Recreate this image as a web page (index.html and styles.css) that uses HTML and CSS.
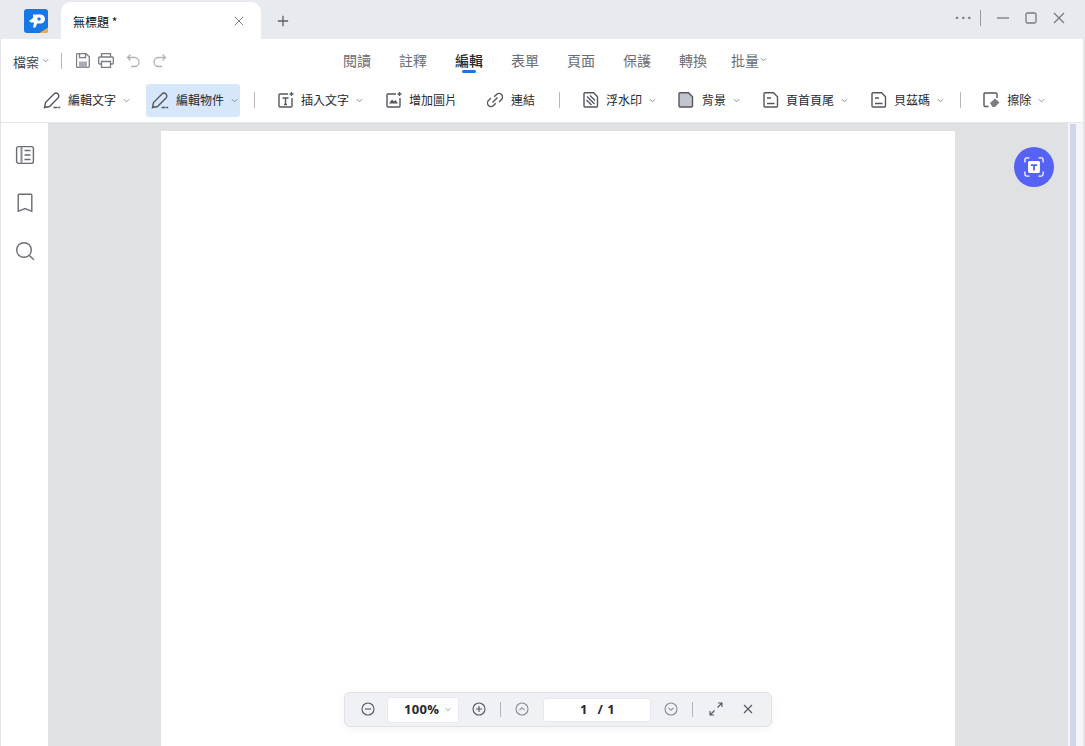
FILE: index.html
```html
<!DOCTYPE html>
<html lang="zh-Hant">
<head>
<meta charset="utf-8">
<title>無標題</title>
<link rel="stylesheet" href="styles.css">
</head>
<body>
<div class="window">
  <header class="titlebar">
    <svg class="logo" viewBox="0 0 24 24"><rect width="24" height="24" rx="3" fill="#1678e6"/><path d="M24 18.500V21a3 3 0 0 1-3 3h-5.500z" fill="#f5a742"/><path d="M5 12 9 9V5.500h7.500a4.500 4.500 0 0 1 0 9H13l-1.500 4H9l1-5H7z" fill="#fff"/><circle cx="15" cy="10" r="1.700" fill="#1678e6"/></svg>
    <div class="tab"><span class="tab-title">無標題 *</span>
      <svg class="tab-close" viewBox="0 0 12 12"><path d="M1 1l10 10M11 1 1 11"/></svg></div>
    <svg class="tab-add" viewBox="0 0 14 14"><path d="M7 1v12M1 7h12"/></svg>
    <div class="winctl">
      <span class="dots">···</span><i class="wsep"></i>
      <svg viewBox="0 0 12 12" class="wbtn"><path d="M0 6h12"/></svg>
      <svg viewBox="0 0 12 12" class="wbtn"><rect x="1" y="1" width="10" height="10" rx="1.500"/></svg>
      <svg viewBox="0 0 12 12" class="wbtn"><path d="M1 1l10 10M11 1 1 11"/></svg>
    </div>
  </header>

  <div class="menubar">
    <div class="filemenu">
      <span class="file">檔案</span><svg class="chev" viewBox="0 0 8 5"><path d="M1 1l3 3 3-3"/></svg>
      <i class="vsep short"></i>
      <svg class="qi save" viewBox="0 0 14 15"><path d="M1.500.7h8.500l3.300 3v9.600a1 1 0 0 1-1 1H1.500a1 1 0 0 1-1-1V1.700a1 1 0 0 1 1-1z"/><path d="M3.500.7v4h6v-4"/><rect x="3" y="8.500" width="8" height="6" fill="#a9abb2" stroke="none"/></svg>
      <svg class="qi print" viewBox="0 0 16 15"><path d="M3.500 4V.7h9V4M3.500 11H1.700a1 1 0 0 1-1-1V5a1 1 0 0 1 1-1h12.600a1 1 0 0 1 1 1v5a1 1 0 0 1-1 1h-1.800"/><path d="M3.500 8.500h9v6h-9z"/></svg>
      <svg class="qi light undo" viewBox="0 0 14 15"><path d="M4.500 1.500 1.500 4.500l3 3M1.500 4.500h7a4.500 4.500 0 0 1 0 9H5"/></svg>
      <svg class="qi light" viewBox="0 0 14 15"><path d="M9.500 1.500l3 3-3 3M12.500 4.500h-7a4.500 4.500 0 0 0 0 9H9"/></svg>
    </div>
    <nav class="nav">
      <a>閱讀</a><a>註釋</a><a class="on">編輯</a><a>表單</a><a>頁面</a><a>保護</a><a>轉換</a>
      <a class="batch">批量<svg class="chev" viewBox="0 0 8 5"><path d="M1 1l3 3 3-3"/></svg></a>
    </nav>
  </div>

  <div class="toolbar">
    <div class="tool t1"><svg class="ti" viewBox="0 0 18 18"><path d="M1.500 16.500l1-5L11 3a2.800 2.800 0 0 1 4 4l-8.500 8.500z"/><path d="M10.500 16.500h4M15.200 16.500h2"/></svg><span>編輯文字</span><svg class="chev" viewBox="0 0 8 5"><path d="M1 1l3 3 3-3"/></svg></div>
    <div class="tool sel"><svg class="ti" viewBox="0 0 18 18"><path d="M1.500 16.500l1-5L11 3a2.800 2.800 0 0 1 4 4l-8.500 8.500z"/><path d="M10.500 16.500h4M15.200 16.500h2"/></svg><span>編輯物件</span><svg class="chev" viewBox="0 0 8 5"><path d="M1 1l3 3 3-3"/></svg></div>
    <i class="vsep s1"></i>
    <div class="tool t3"><svg class="ti" viewBox="0 0 16 16"><path d="M10 2H2a1 1 0 0 0-1 1v11a1 1 0 0 0 1 1h11a1 1 0 0 0 1-1V6"/><path d="M4.500 6h6M7.500 6v6.500M6 12.500h3M13.500 0v4M11.500 2h4"/></svg><span>插入文字</span><svg class="chev" viewBox="0 0 8 5"><path d="M1 1l3 3 3-3"/></svg></div>
    <div class="tool t4"><svg class="ti" viewBox="0 0 16 16"><path d="M10 2H2a1 1 0 0 0-1 1v11a1 1 0 0 0 1 1h11a1 1 0 0 0 1-1V6"/><path d="M3 11.500l3-4 2 2 1.500-1.500 2.500 3.500z" fill="#55575f" stroke="none"/><path d="M13.500 0v4M11.500 2h4"/></svg><span>增加圖片</span></div>
    <div class="tool t5"><svg class="ti" viewBox="0 0 16 16"><path d="M7.200 4.800 9.500 2.500a3.500 3.500 0 0 1 5 5L12 10"/><path d="M8.800 11.200 6.500 13.500a3.500 3.500 0 0 1-5-5L4 6"/><path d="M5.500 10.500l5-5"/></svg><span>連結</span></div>
    <i class="vsep s2"></i>
    <div class="tool t6"><svg class="ti" viewBox="0 0 16 16"><path d="M2 .8h8.500L14.500 4.800V14a1 1 0 0 1-1 1H2a1 1 0 0 1-1-1V1.800a1 1 0 0 1 1-1z"/><path d="M4 4.500l7.500 7.500M3.500 8l5 5M7 3.500l5 5"/></svg><span>浮水印</span><svg class="chev" viewBox="0 0 8 5"><path d="M1 1l3 3 3-3"/></svg></div>
    <div class="tool t7"><svg class="ti" viewBox="0 0 16 16"><path d="M2 .8h8.500L14.500 4.800V14a1 1 0 0 1-1 1H2a1 1 0 0 1-1-1V1.800a1 1 0 0 1 1-1z" fill="#c3c5cc"/></svg><span>背景</span><svg class="chev" viewBox="0 0 8 5"><path d="M1 1l3 3 3-3"/></svg></div>
    <div class="tool t8"><svg class="ti" viewBox="0 0 16 16"><path d="M2 .8h8.500L14.500 4.800V14a1 1 0 0 1-1 1H2a1 1 0 0 1-1-1V1.800a1 1 0 0 1 1-1z"/><path d="M4 6h4M4 11.500h7.500"/></svg><span>頁首頁尾</span><svg class="chev" viewBox="0 0 8 5"><path d="M1 1l3 3 3-3"/></svg></div>
    <div class="tool t9"><svg class="ti" viewBox="0 0 16 16"><path d="M2 .8h8.500L14.500 4.800V14a1 1 0 0 1-1 1H2a1 1 0 0 1-1-1V1.800a1 1 0 0 1 1-1z"/><path d="M4 6h4M4 11.500h7.500"/></svg><span>貝茲碼</span><svg class="chev" viewBox="0 0 8 5"><path d="M1 1l3 3 3-3"/></svg></div>
    <i class="vsep s3"></i>
    <div class="tool t10"><svg class="ti" viewBox="0 0 17 16"><path d="M5.500 14.500H2a1 1 0 0 1-1-1V2a1 1 0 0 1 1-1h11a1 1 0 0 1 1 1v4"/><path d="M7 11l5-4.500 4.500 4-4.500 4.500H9.500z" fill="#7b7d85" stroke="none"/></svg><span>擦除</span><svg class="chev" viewBox="0 0 8 5"><path d="M1 1l3 3 3-3"/></svg></div>
  </div>

  <main class="main">
    <aside class="side">
      <svg class="si" viewBox="0 0 20 20"><rect x="1.600" y="1.600" width="16.800" height="16.800" rx="1.800"/><path d="M6.500 1.600v16.800" stroke-width="2" stroke="#8d8f96"/><path d="M9.500 5.500h6M9.500 10h6M9.500 14.500h6"/></svg>
      <svg class="si" viewBox="0 0 20 20"><path d="M4 1.200h12a.8.8 0 0 1 .8.8v16.300L10 15.500 3.200 18.300V2a.8.8 0 0 1 .8-.8z"/></svg>
      <svg class="si" viewBox="0 0 20 20"><circle cx="9" cy="9" r="7.300"/><path d="M14.500 14.500l4.300 4.300"/></svg>
    </aside>
    <div class="canvas"><div class="page"></div></div>
    <div class="scroll"><i></i></div>

    <div class="fab"><svg viewBox="0 0 22 22"><path d="M1 6V3a2 2 0 0 1 2-2h3M16 1h3a2 2 0 0 1 2 2v3M21 16v3a2 2 0 0 1-2 2h-3M6 21H3a2 2 0 0 1-2-2v-3" fill="none" stroke="#fff" stroke-width="1.400"/><rect x="4.500" y="4.500" width="13" height="13" rx="1.500" fill="#fff"/><path d="M7.500 8h7v1.800h-2.500v5h-2v-5H7.500z" fill="#5662f6"/></svg></div>

    <div class="pager">
      <svg class="pi" viewBox="0 0 14 14"><circle cx="7" cy="7" r="6"/><path d="M4 7h6"/></svg>
      <div class="zoombox"><b>100%</b><svg class="chev" viewBox="0 0 8 5"><path d="M1 1l3 3 3-3"/></svg></div>
      <svg class="pi" viewBox="0 0 14 14"><circle cx="7" cy="7" r="6"/><path d="M4 7h6M7 4v6"/></svg>
      <i class="psep"></i>
      <svg class="pi dim" viewBox="0 0 14 14"><circle cx="7" cy="7" r="6"/><path d="M4.500 8.200 7 5.700l2.500 2.500"/></svg>
      <div class="pagebox"><b>1</b><b class="slash">/ 1</b></div>
      <svg class="pi dim" viewBox="0 0 14 14"><circle cx="7" cy="7" r="6"/><path d="M4.500 5.800 7 8.300l2.500-2.500"/></svg>
      <i class="psep"></i>
      <svg class="pi expand" viewBox="0 0 14 14"><path d="M8.500 5.500 13 1M9 1h4v4M5.500 8.500 1 13M1 9v4h4"/></svg>
      <svg class="pi small" viewBox="0 0 10 10"><path d="M1 1l8 8M9 1 1 9"/></svg>
    </div>
  </main>
</div>
</body>
</html>
```
FILE: styles.css
```css
* { box-sizing: border-box; }
html, body { margin: 0; height: 100%; overflow: hidden; }
body { font-family: "Noto Sans CJK TC", "Noto Sans", sans-serif; color: #26282e; background: #fff; }
svg { display: block; flex: none; fill: none; stroke: #5d5f67; stroke-width: 1.300; }
.window { width: 1085px; height: 746px; display: flex; flex-direction: column; border-left: 1px solid #e3e5e8; border-right: 2px solid #e3e5e8; }

.titlebar { height: 39px; background: #e7eaee; display: flex; align-items: flex-end; margin: 0 -2px 0 -1px; position: relative; padding-left: 24px; }
.logo { width: 24px; height: 24px; stroke: none; margin-bottom: 6px; }
.tab { width: 200px; height: 37px; margin-left: 13px; background: #fff; border-radius: 10px 10px 0 0; display: flex; align-items: center; justify-content: space-between; padding: 1px 17px 0 12px; }
.tab-title { font-size: 12px; color: #111; }
.tab-close { width: 10px; height: 10px; stroke: #7c7e86; stroke-width: 1.200; }
.tab-add { width: 12px; height: 12px; margin: 0 0 12px 16px; stroke: #5d5f67; stroke-width: 1.500; }
.winctl { margin-left: auto; display: flex; align-items: center; height: 36px; padding-right: 20px; align-self: flex-start; }
.dots { font-size: 14px; letter-spacing: 1.500px; color: #777; width: 19px; font-family: "Liberation Sans", sans-serif; font-weight: bold; }
.wsep { width: 1px; height: 16px; background: #9a9ca3; margin: 0 10px 0 6px; }
.wbtn { width: 12px; height: 12px; margin: 0 0 0 16px; stroke: #77797f; stroke-width: 1.300; }
.wsep + .wbtn { margin-left: 6px; }

.menubar { height: 43px; position: relative; display: flex; align-items: center; justify-content: center; flex: none; padding-bottom: 1px; }
.filemenu { position: absolute; left: 12px; top: 0; height: 43px; display: flex; align-items: center; }
.file { font-size: 13px; color: #44464d; line-height: 16px; margin-top: 2px; }
.chev { width: 7px; height: 5px; stroke: #7b7d85; stroke-width: 1; }
.filemenu .chev { margin-left: 3px; }
.vsep { display: block; width: 1px; background: #b4b6bc; flex: none; height: 16px; }
.vsep.short { margin: 0 14px 0 12px; }
.qi { width: 14px; height: 15px; margin-right: 8px; stroke: #7a7c84; stroke-width: 1.300; }
.qi.print { width: 16px; margin-right: 12px; }
.qi.light { stroke: #b0b2b8; }
.qi.undo { margin-right: 13px; }
.nav { display: flex; gap: 28px; font-size: 14px; color: #6b6d74; margin-left: 20px; position: relative; left: 3px; }
.nav a { display: block; line-height: 20px; position: relative; white-space: nowrap; }
.nav .on { color: #26282e; font-weight: 500; }
.nav .on::after { content: ""; position: absolute; left: 7px; right: 7px; bottom: -3px; height: 3px; border-radius: 2px; background: #1a73e8; }
.nav .batch { display: flex; align-items: center; margin-left: -4px; gap: 1px; }
.nav .batch .chev { margin-top: -2px; }

.toolbar { height: 41px; display: flex; align-items: center; font-size: 12px; color: #26282e; border-bottom: 1px solid #e6e7e9; flex: none; padding-bottom: 4px; }
.tool { display: flex; align-items: center; height: 33px; white-space: nowrap; }
.tool span { line-height: 16px; }
.tool .chev { margin-left: 7px; }
.ti { width: 18px; height: 18px; margin-right: 7px; stroke: #55575f; stroke-width: 1.400; }
.t3 .ti, .t4 .ti, .t5 .ti, .t6 .ti, .t7 .ti, .t8 .ti, .t9 .ti { width: 16px; height: 16px; margin-right: 7px; }
.t5 .ti, .t7 .ti { margin-right: 8px; }
.t10 .ti { width: 17px; height: 16px; margin-right: 7px; }
.t1 { margin-left: 42px; }
.sel { margin-left: 16px; width: 94px; padding-left: 5px; background: #d7e7fb; border-radius: 3px; }
.s1 { margin-left: 14px; }
.t3 { margin-left: 23px; }
.t4 { margin-left: 23px; }
.t5 { margin-left: 30px; }
.s2 { margin-left: 24px; }
.t6 { margin-left: 23px; }
.t7 { margin-left: 22px; }
.t8 { margin-left: 23px; }
.t9 { margin-left: 23px; }
.s3 { margin-left: 16px; }
.t10 { margin-left: 22px; }

.main { flex: 1; display: flex; position: relative; min-height: 0; }
.side { width: 47px; display: flex; flex-direction: column; align-items: center; gap: 28px; padding-top: 22px; flex: none; }
.si { width: 20px; height: 20px; stroke: #6a6c73; stroke-width: 1.400; }
.canvas { flex: 1; background: #e0e1e3; padding: 8px 113px 0; overflow: hidden; }
.page { background: #fff; height: 100%; width: 794px; }
.scroll { width: 15px; background: #f4f5f7; padding: 1px 7px 0 2px; flex: none; }
.scroll i { display: block; height: 100%; background: #d0d7e8; }

.fab { position: absolute; left: 1013px; top: 24px; width: 40px; height: 40px; border-radius: 50%; background: #5662f6; display: flex; align-items: center; justify-content: center; }
.fab svg { width: 20px; height: 20px; stroke: none; }

.pager { position: absolute; left: 343px; bottom: 19px; width: 428px; height: 35px; background: #f0f1f4; border: 1px solid #e0e2e6; border-radius: 6px; box-shadow: 0 2px 10px rgba(0,0,0,.05); display: flex; align-items: center; padding-left: 16px; }
.pi { width: 14px; height: 14px; margin-top: -1px; stroke: #54565e; stroke-width: 1.100; }
.pi.dim { stroke: #8a8c93; }
.pi.expand { margin-left: 2px; }
.pi.small { width: 10px; height: 10px; margin-left: 20px; }
.zoombox { width: 72px; height: 26px; margin: 0 13px 0 12px; background: #fff; border: 1px solid #e8e9ec; border-radius: 3px; display: flex; align-items: center; padding: 0 0 2px 16px; font-size: 13px; }
.zoombox b { font-family: "Open Sans", sans-serif; font-weight: 700; color: #26282e; letter-spacing: .3px; }
.zoombox .chev { margin: 2px 0 0 6px; width: 6px; }
.psep { display: block; width: 1px; height: 15px; background: #b4b6bc; margin: 0 14px; }
.pagebox { width: 108px; height: 24px; margin: 0 13px 0 14px; background: #fff; border: 1px solid #e8e9ec; border-radius: 3px; display: flex; align-items: center; padding: 0 0 2px 36px; font-size: 13px; }
.pagebox b { font-family: "Open Sans", sans-serif; font-weight: 700; color: #26282e; }
.pagebox .slash { margin-left: 10px; word-spacing: 1px; }
```
